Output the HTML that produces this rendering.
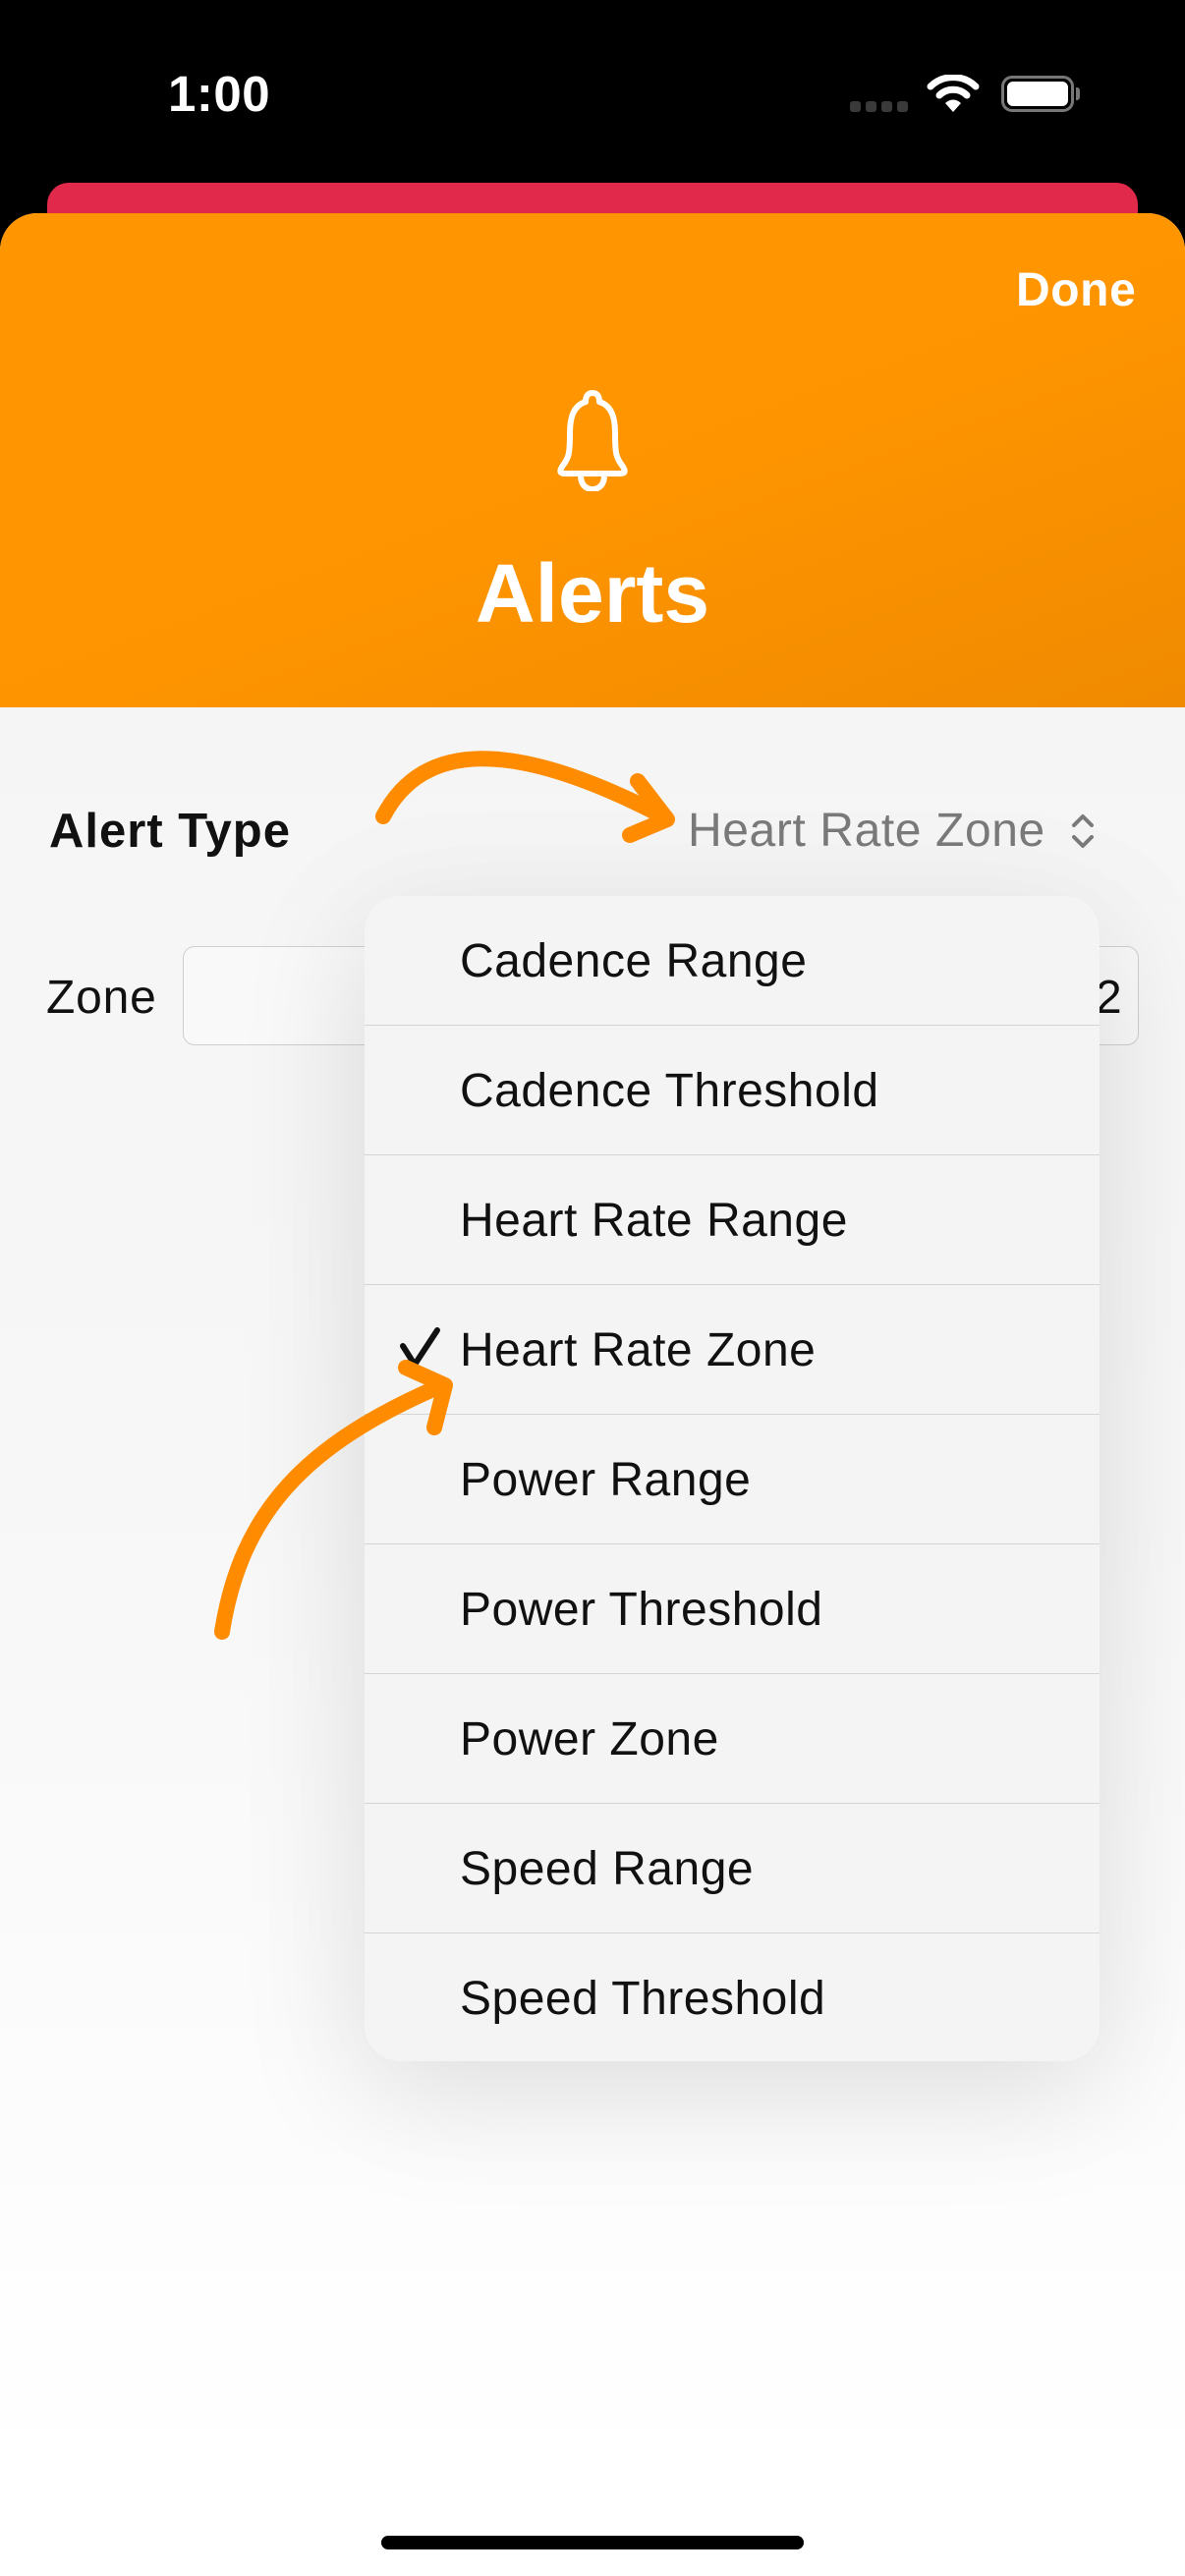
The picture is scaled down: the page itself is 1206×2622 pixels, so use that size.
<!DOCTYPE html>
<html><head><meta charset="utf-8"><style>
*{margin:0;padding:0;box-sizing:border-box}
body{width:1206px;height:2622px;position:relative;overflow:hidden;background:#000;font-family:"Liberation Sans",sans-serif}
.abs{position:absolute}
.t{position:absolute;white-space:nowrap;line-height:1}
.row{position:absolute;left:0;right:0;height:132px;border-bottom:1.5px solid #d4d4d4}
.row span{position:absolute;left:97px;top:39px;font-size:48px;letter-spacing:0.5px;color:#111}
</style></head><body>
<div class="t" style="left:171px;top:70px;font-size:51px;font-weight:bold;color:#fff;letter-spacing:0.5px">1:00</div>
<div class="abs" style="left:865px;top:103px;width:11px;height:11px;border-radius:3px;background:#3a3a3a"></div>
<div class="abs" style="left:881px;top:103px;width:11px;height:11px;border-radius:3px;background:#3a3a3a"></div>
<div class="abs" style="left:897px;top:103px;width:11px;height:11px;border-radius:3px;background:#3a3a3a"></div>
<div class="abs" style="left:913px;top:103px;width:11px;height:11px;border-radius:3px;background:#3a3a3a"></div>
<svg class="abs" style="left:943px;top:76px" width="54" height="40" viewBox="0 0 54 40"><path d="M4 12 A33 33 0 0 1 50 12" stroke="#fff" stroke-width="7" fill="none" stroke-linecap="round"/><path d="M13 21 A20 20 0 0 1 41 21" stroke="#fff" stroke-width="7" fill="none" stroke-linecap="round"/><path d="M27 38 L19 29 A11 11 0 0 1 35 29 Z" fill="#fff"/></svg>
<div class="abs" style="left:1019px;top:77px;width:74px;height:37px;border:3px solid #777;border-radius:11px"></div>
<div class="abs" style="left:1025px;top:83px;width:62px;height:25px;background:#fff;border-radius:6px"></div>
<div class="abs" style="left:1095px;top:89px;width:4px;height:13px;background:#777;border-radius:0 3px 3px 0"></div>

<div class="abs" style="left:48px;top:186px;width:1110px;height:80px;background:#e0294b;border-radius:22px 22px 0 0"></div>
<div class="abs" style="left:0;top:217px;width:1206px;height:2405px;border-radius:38px 38px 0 0;overflow:hidden;background:linear-gradient(#f4f4f4 0,#f7f7f7 1300px,#fff 2300px)">
  <div class="abs" style="left:0;top:0;width:1206px;height:503px;background:linear-gradient(160deg,#ff9500 50%,#f08a00 100%)"></div>
</div>
<div class="t" style="left:1034px;top:272px;font-size:48px;font-weight:bold;color:#fff;letter-spacing:0.6px">Done</div>
<svg class="abs" style="left:553px;top:396px" width="100" height="104" viewBox="0 0 100 104"><path d="M50 4 C44 4 43 9 43 13 C30 17 27 30 27 45 C27 66 26 70 19 79 C16 84 17 86 22 86 L78 86 C83 86 84 84 81 79 C74 70 73 66 73 45 C73 30 70 17 57 13 C57 9 56 4 50 4 Z" fill="none" stroke="#fff" stroke-width="6" stroke-linejoin="round"/><path d="M38 88 C38 98 44 102 50 102 C56 102 62 98 62 88" fill="none" stroke="#fff" stroke-width="6"/></svg>
<div class="t" style="left:484px;top:562px;font-size:84px;font-weight:bold;color:#fff">Alerts</div>

<div class="t" style="left:50px;top:822px;font-size:49px;font-weight:bold;color:#111;letter-spacing:1px">Alert Type</div>
<div class="t" style="left:700px;top:822px;font-size:48px;color:#7a7a7a;letter-spacing:0.6px">Heart Rate Zone</div>
<svg class="abs" style="left:1088px;top:826px" width="28" height="40" viewBox="0 0 28 40"><path d="M5 14 L14 5 L23 14 M5 26 L14 35 L23 26" fill="none" stroke="#7a7a7a" stroke-width="4" stroke-linecap="round" stroke-linejoin="round"/></svg>
<div class="t" style="left:47px;top:992px;font-size:48px;color:#111;letter-spacing:0.8px">Zone</div>
<div class="abs" style="left:186px;top:963px;width:973px;height:101px;border:1.5px solid #cfcfcf;border-radius:12px;background:#f9f9f9"></div>
<div class="t" style="left:1115px;top:992px;font-size:48px;color:#111">2</div>

<div class="abs" style="left:371px;top:912px;width:748px;height:1186px;background:#f4f4f4;border-radius:36px;overflow:hidden;box-shadow:0 30px 160px rgba(0,0,0,0.13)">
  <div class="row" style="top:0"><span>Cadence Range</span></div>
  <div class="row" style="top:132px"><span>Cadence Threshold</span></div>
  <div class="row" style="top:264px"><span>Heart Rate Range</span></div>
  <div class="row" style="top:396px"><span>Heart Rate Zone</span></div>
  <div class="row" style="top:528px"><span>Power Range</span></div>
  <div class="row" style="top:660px"><span>Power Threshold</span></div>
  <div class="row" style="top:792px"><span>Power Zone</span></div>
  <div class="row" style="top:924px"><span>Speed Range</span></div>
  <div class="row" style="top:1056px;border:none"><span>Speed Threshold</span></div>
</div>

<svg class="abs" style="left:0;top:0" width="1206" height="2622"><g fill="none" stroke-linecap="round" stroke-linejoin="round">
<path d="M410 1370 L422 1389 L445 1354" stroke="#111" stroke-width="6"/>
<g stroke="#ff8c00" stroke-width="16">
<path d="M390 831 C430 755 520 750 677 832"/><path d="M649 795 L679 834 L641 850"/>
<path d="M226 1661 C245 1540 310 1470 450 1410"/><path d="M413 1392 L453 1410 L442 1453"/>
</g></g></svg>

<div class="abs" style="left:388px;top:2581px;width:430px;height:14px;border-radius:7px;background:#000"></div>
</body></html>
